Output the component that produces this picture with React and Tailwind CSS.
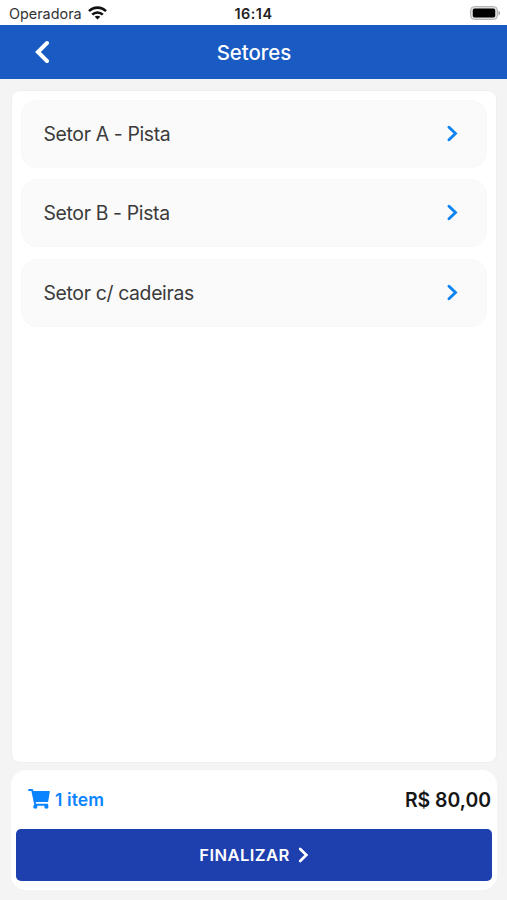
const sectors = ["Setor A - Pista", "Setor B - Pista", "Setor c/ cadeiras"];

function ChevronRight({ className }) {
  return (
    <svg className={className} viewBox="0 0 11 17" fill="none" stroke="currentColor" strokeWidth="2.9" strokeLinecap="round" strokeLinejoin="miter">
      <path d="M2 2.2 8.5 8.5 2 14.8" />
    </svg>
  );
}

function ChevronLeft({ className }) {
  return (
    <svg className={className} viewBox="0 0 14 24" fill="none" stroke="currentColor" strokeWidth="4" strokeLinecap="round" strokeLinejoin="miter">
      <path d="M12 3 2.9 12 12 21" />
    </svg>
  );
}

function Cart({ className }) {
  return (
    <svg className={className} viewBox="0 0 22 20" fill="none" stroke="currentColor" strokeLinecap="round" strokeLinejoin="round">
      <path d="M1 1.1h3.2l3.1 14.6h12" strokeWidth="2" />
      <path d="M5.1 2.7h16l-1.6 9.7H7.1Z" fill="currentColor" strokeWidth="1.4" />
      <circle cx="7.3" cy="17.7" r="2.1" fill="currentColor" stroke="none" />
      <circle cx="18.4" cy="17.7" r="2.1" fill="currentColor" stroke="none" />
    </svg>
  );
}

function StatusBar() {
  return (
    <div className="grid h-[25px] shrink-0 grid-cols-3 items-center bg-white pl-[9px] pr-[6px]">
      <div className="flex items-center gap-[6px] pt-[2px]">
        <span className="text-[14.4px] leading-5 text-[#333]">Operadora</span>
        <svg className="mb-[2px] h-[14px] w-[19px]" viewBox="0 0 19 14" fill="none" stroke="#111" strokeWidth="2.6">
          <path d="M1 5.2C5.8.4 13.2.4 18 5.2" />
          <path d="M4.2 8.6c3-2.9 7.6-2.9 10.6 0" />
          <path d="M9.5 13.6 6.7 10.8c1.6-1.5 4-1.5 5.6 0Z" fill="#111" stroke="none" />
        </svg>
      </div>
      <span className="-ml-[3px] pt-[2px] text-center text-[14.4px] font-semibold leading-5 tracking-[0.5px] text-[#222]">16:14</span>
      <svg className="h-[14px] w-[31px] justify-self-end" viewBox="0 0 31 14">
        <rect x="0.6" y="0.6" width="26.8" height="12.8" rx="3.6" fill="#dedede" stroke="#b0b0b0" strokeWidth="1" />
        <rect x="2.8" y="2.6" width="22.4" height="9" rx="1.8" fill="#000" />
        <path d="M28.4 4.8c2.4.8 2.4 3.9 0 4.7Z" fill="#aaa" />
      </svg>
    </div>
  );
}

export default function App() {
  return (
    <div className="flex h-[900px] w-[507px] flex-col bg-[#f4f4f4] font-['Inter',sans-serif]">
      <StatusBar />
      <header className="grid h-[54px] shrink-0 grid-cols-[1fr_auto_1fr] items-center bg-[#195bc3] text-white">
        <ChevronLeft className="ml-[35px] h-6 w-[14px]" />
        <h1 className="pl-px pt-px text-[20.4px] font-medium leading-6">Setores</h1>
      </header>
      <main className="ml-[11px] mr-[10px] mt-[11px] flex h-[673px] shrink-0 flex-col gap-[11.4px] rounded-[9px] border border-[#efefef] bg-white px-[9px] pt-[9px]">
        {sectors.map((name) => (
          <button key={name} className="flex h-[68px] w-full shrink-0 items-center justify-between rounded-[16px] border border-[#f8f8f8] bg-[#fafafa] pl-[21.5px] pr-[28px]">
            <span className="text-[19.4px] leading-7 tracking-[-0.35px] text-[#3a3a3a]">{name}</span>
            <ChevronRight className="mb-px h-[17px] w-[11px] text-[#0d84f2]" />
          </button>
        ))}
      </main>
      <footer className="ml-[11px] mr-[10px] mt-[7px] flex h-[120px] shrink-0 flex-col rounded-[15px] bg-white px-[5px]">
        <div className="flex h-[59px] items-center justify-between pl-[12px] pr-px">
          <div className="flex items-center gap-[5px] text-[#0a84ff]">
            <Cart className="mb-[2px] h-[20px] w-[22px]" />
            <span className="text-[17.5px] font-semibold leading-6 tracking-[0.1px]">1 item</span>
          </div>
          <span className="text-[19.4px] font-semibold leading-6 text-[#161616]">R$ 80,00</span>
        </div>
        <button className="flex h-[52px] items-center justify-center gap-[8px] rounded-[5px] bg-[#1e40af] text-white">
          <span className="text-[16.6px] font-semibold leading-6 tracking-[0.4px]">FINALIZAR</span>
          <ChevronRight className="h-[16px] w-[11px]" />
        </button>
      </footer>
    </div>
  );
}
